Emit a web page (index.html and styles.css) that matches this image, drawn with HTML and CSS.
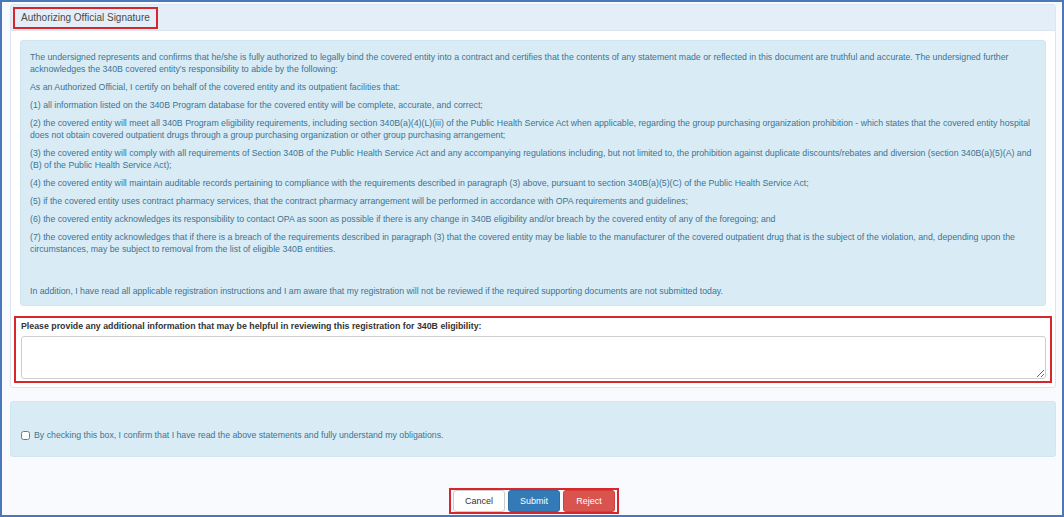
FILE: index.html
```html
<!DOCTYPE html>
<html lang="en">

<head>
    <meta charset="UTF-8">
    <title>Authorizing Official Signature</title>
    <link rel="stylesheet" href="styles.css">
</head>

<body>
    <div class="frame">
        <div class="panel">
            <div class="panel-heading">
                <span class="panel-title">Authorizing Official Signature</span>
            </div>
            <div class="panel-body">
                <div class="alert-info">
                    <p>The undersigned represents and confirms that he/she is fully authorized to legally bind the covered entity into a contract and certifies that the contents of any statement made or reflected in this document are truthful and accurate. The undersigned further acknowledges the 340B covered entity’s responsibility to abide by the following:</p>
                    <p>As an Authorized Official, I certify on behalf of the covered entity and its outpatient facilities that:</p>
                    <p>(1) all information listed on the 340B Program database for the covered entity will be complete, accurate, and correct;</p>
                    <p>(2) the covered entity will meet all 340B Program eligibility requirements, including section 340B(a)(4)(L)(iii) of the Public Health Service Act when applicable, regarding the group purchasing organization prohibition - which states that the covered entity hospital does not obtain covered outpatient drugs through a group purchasing organization or other group purchasing arrangement;</p>
                    <p>(3) the covered entity will comply with all requirements of Section 340B of the Public Health Service Act and any accompanying regulations including, but not limited to, the prohibition against duplicate discounts/rebates and diversion (section 340B(a)(5)(A) and (B) of the Public Health Service Act);</p>
                    <p>(4) the covered entity will maintain auditable records pertaining to compliance with the requirements described in paragraph (3) above, pursuant to section 340B(a)(5)(C) of the Public Health Service Act;</p>
                    <p>(5) if the covered entity uses contract pharmacy services, that the contract pharmacy arrangement will be performed in accordance with OPA requirements and guidelines;</p>
                    <p>(6) the covered entity acknowledges its responsibility to contact OPA as soon as possible if there is any change in 340B eligibility and/or breach by the covered entity of any of the foregoing; and</p>
                    <p>(7) the covered entity acknowledges that if there is a breach of the requirements described in paragraph (3) that the covered entity may be liable to the manufacturer of the covered outpatient drug that is the subject of the violation, and, depending upon the circumstances, may be subject to removal from the list of eligible 340B entities.</p>
                    <div class="spacer"></div>
                    <p>In addition, I have read all applicable registration instructions and I am aware that my registration will not be reviewed if the required supporting documents are not submitted today.</p>
                </div>

                <div class="comment-group">
                    <label class="comment-label" for="comments">Please provide any additional information that may be helpful in reviewing this registration for 340B eligibility:</label>
                    <textarea id="comments" class="comment-box"></textarea>
                </div>
            </div>
        </div>

        <div class="well">
            <label class="confirm">
                <input type="checkbox" class="confirm-check">
                <span>By checking this box, I confirm that I have read the above statements and fully understand my obligations.</span>
            </label>
        </div>

        <div class="actions">
            <div class="action-group">
                <button class="btn btn-default">Cancel</button>
                <button class="btn btn-primary">Submit</button>
                <button class="btn btn-danger">Reject</button>
            </div>
        </div>
    </div>
</body>

</html>
```

FILE: styles.css
```css
body {
    margin: 0;
    padding: 0;
    font-family: 'Liberation Sans', Arial, sans-serif;
    background-color: #fff;
}

.frame {
    width: 1064px;
    height: 517px;
    box-sizing: border-box;
    border: 2px solid #4a78b8;
    background-color: #f8fafd;
    padding: 2px 6px 0 8px;
    display: flex;
    flex-direction: column;
}

.panel {
    background-color: #fff;
    border: 1px solid #dde6ee;
    border-radius: 3px;
}

.panel-heading {
    background-color: #e4eef8;
    border-bottom: 1px solid #dbe5ef;
    padding: 2px 2px 1px 2px;
    display: flex;
}

.panel-title {
    border: 2px solid #d8262d;
    font-size: 10px;
    color: #4a4a4a;
    padding: 3px 6px 3px 6px;
    line-height: 12px;
}

.panel-body {
    padding: 9px 3px 4px 3px;
}

.alert-info {
    margin: 0 6px 0 6px;
    background-color: #d9ecf6;
    border: 1px solid #cfe6f1;
    border-radius: 3px;
    color: #3d7392;
    font-size: 8.75px;
    line-height: 12px;
    padding: 10px 9px 8px 9px;
}

.alert-info p {
    margin: 0 0 6px 0;
}

.alert-info p:last-child {
    margin-bottom: 0;
}

.spacer {
    height: 24px;
}

.comment-group {
    margin-top: 10px;
    border: 2px solid #d8262d;
    padding: 2px 4px 2px 5px;
    display: flex;
    flex-direction: column;
}

.comment-label {
    font-size: 8.8px;
    font-weight: bold;
    color: #333;
    line-height: 12px;
    margin-bottom: 4px;
}

.comment-box {
    height: 43px;
    box-sizing: border-box;
    border: 1px solid #cfcfcf;
    border-radius: 3px;
    background-color: #fff;
    margin: 0;
}

.well {
    margin-top: 13px;
    background-color: #d9ecf6;
    border: 1px solid #d0e6f1;
    border-radius: 3px;
    height: 56px;
    box-sizing: border-box;
    padding: 28px 10px 0 10px;
}

.confirm {
    display: flex;
    align-items: center;
    font-size: 8.75px;
    color: #3d7392;
}

.confirm-check {
    width: 9px;
    height: 9px;
    margin: 0 4px 0 0;
}

.actions {
    margin-top: auto;
    margin-bottom: 1px;
    display: flex;
    justify-content: center;
    padding-left: 2px;
}

.action-group {
    border: 2px solid #d8262d;
    padding: 0 2px;
    display: flex;
    gap: 3px;
}

.btn {
    font-family: 'Liberation Sans', Arial, sans-serif;
    font-size: 9px;
    width: 52px;
    height: 22px;
    border-radius: 3px;
    border: 1px solid #ccc;
    padding: 0;
    cursor: pointer;
}

.btn-default {
    background-color: #fff;
    color: #333;
}

.btn-primary {
    background-color: #337ab7;
    border-color: #2e6da4;
    color: #fff;
}

.btn-danger {
    background-color: #d9534f;
    border-color: #d43f3a;
    color: #fff;
}
```
